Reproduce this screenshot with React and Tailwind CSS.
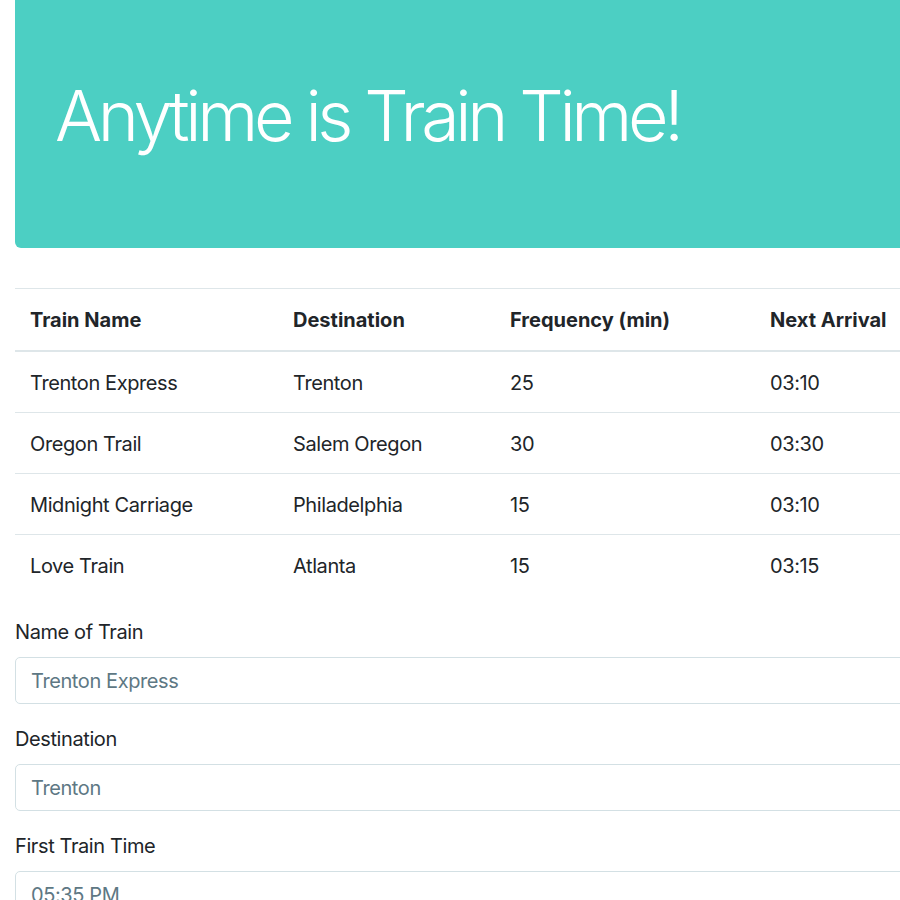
import React from "react";

const rows = [
  ["Trenton Express", "Trenton", "25", "03:10"],
  ["Oregon Trail", "Salem Oregon", "30", "03:30"],
  ["Midnight Carriage", "Philadelphia", "15", "03:10"],
  ["Love Train", "Atlanta", "15", "03:15"],
];

const fields = [
  ["Name of Train", "Trenton Express"],
  ["Destination", "Trenton"],
  ["First Train Time", "05:35 PM"],
  ["Frequency (min)", "25"],
];

export default function App() {
  return (
    <div
      className="w-[900px] h-[900px] overflow-hidden bg-white text-[#212529]"
      style={{ fontFamily: "Inter, 'Noto Sans', sans-serif" }}
    >
      <div className="w-[1200px] pl-[15px]">
        <div className="bg-[#4ccfc3] rounded-bl-[6px] pt-[74px] pb-[80px] px-[40px]">
          <h1 className="text-[70px] leading-[84px] font-light text-white mb-[10px] tracking-[-4.4px]">
            Anytime is Train Time!
          </h1>
        </div>

        <table className="mt-[40px] mb-[22px] w-[1100px] table-fixed border-collapse text-[20px] leading-[30px]">
          <colgroup>
            <col className="w-[263px]" />
            <col className="w-[217px]" />
            <col className="w-[260px]" />
            <col />
          </colgroup>
          <thead>
            <tr>
              {["Train Name", "Destination", "Frequency (min)", "Next Arrival"].map((h) => (
                <th
                  key={h}
                  className="text-left font-bold px-[15px] pt-[16px] pb-[15px] border-t border-b-2 border-[#dee6e9]"
                >
                  {h}
                </th>
              ))}
            </tr>
          </thead>
          <tbody className="tracking-[-0.4px]">
            {rows.map((r, i) => (
              <tr key={i}>
                {r.map((c, j) => (
                  <td key={j} className="px-[15px] pt-[16px] pb-[14px] border-t border-[#dee6e9]">
                    {c}
                  </td>
                ))}
              </tr>
            ))}
          </tbody>
        </table>

        <form className="w-[1100px] tracking-[-0.4px]">
          {fields.map(([label, ph]) => (
            <div key={label} className="mb-[20px]">
              <label className="block text-[20px] leading-[30px] mb-[10px]">{label}</label>
              <input
                type="text"
                placeholder={ph}
                className="block w-full h-[47px] border border-[#d3e0e4] rounded-[5px] px-[15px] text-[20px] leading-[30px] tracking-[-0.4px] placeholder:text-[#5e7884] text-[#495057] outline-none"
                style={{ fontFamily: "Inter, 'Noto Sans', sans-serif" }}
              />
            </div>
          ))}
        </form>
      </div>
    </div>
  );
}
